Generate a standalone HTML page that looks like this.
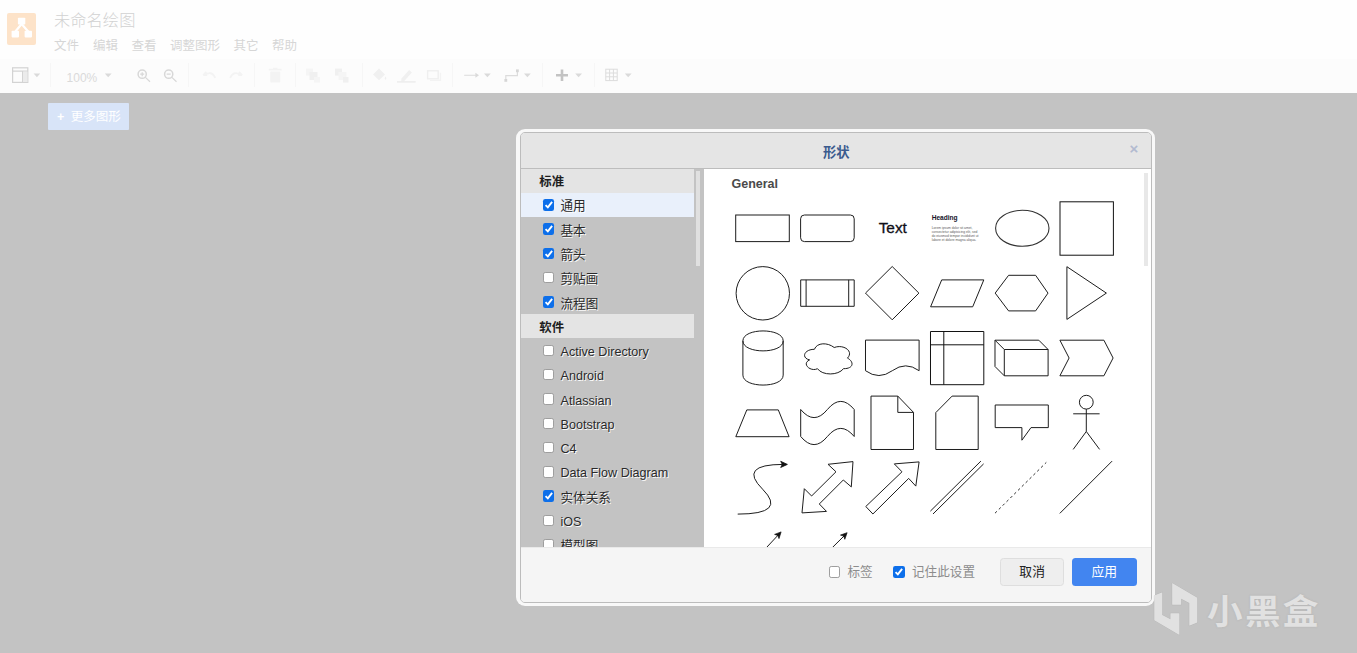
<!DOCTYPE html>
<html lang="zh-CN">
<head>
<meta charset="utf-8">
<title>未命名绘图</title>
<style>
*{box-sizing:border-box;margin:0;padding:0}
html,body{width:1357px;height:653px;overflow:hidden}
body{background:#c3c3c3;font-family:"Liberation Sans","Noto Sans CJK SC",sans-serif;position:relative;color:#222}
.abs{position:absolute}
#topbar{left:0;top:0;width:1357px;height:59px;background:#fefefe}
#toolbar{left:0;top:59px;width:1357px;height:33.5px;background:#fcfcfc}
#logo{left:7px;top:13px;width:29px;height:32px;background:#fde3c9;border-radius:2px}
#doctitle{left:54px;top:8px;font-size:16.3px;line-height:24px;color:#d2d2d2;font-weight:300;white-space:nowrap}
.menu{top:37.200px;font-size:12.5px;line-height:18px;color:#d6d6d6;white-space:nowrap}
.tb{color:#dcdcdc}
#more{left:48px;top:103px;width:81px;height:27px;background:#d8e4f8;border-radius:1px;color:#fff;font-size:12.5px;line-height:29px;white-space:nowrap}
/* dialog */
#dlgo{left:516px;top:128.5px;width:639.2px;height:477.5px;border-radius:9px;background:#f8f8f8}
#dlgi{left:519.5px;top:132px;width:632.4px;height:471px;border-radius:5px;border:1px solid #bcbcbc;background:#f5f5f5;overflow:hidden}
#dtitle{left:0;top:0;width:630.4px;height:35.6px;background:#e5e5e5;border-bottom:1px solid #bdbdbd}
#dtitle span{position:absolute;left:0;width:631.4px;top:9.5px;text-align:center;font-weight:bold;font-size:13.3px;line-height:20px;color:#3b5b8e}
#dclose{left:609px;top:6px;font-size:15px;line-height:20px;color:#b2bad0;font-weight:bold}
#list{left:0;top:35.7px;width:183px;height:378.8px;background:#c3c3c3;overflow:hidden}
.hd{position:absolute;left:0;width:173.5px;height:24.2px;background:#e4e4e4;font-weight:bold;font-size:12.4px;line-height:24px;padding-left:18.8px;padding-top:1.7px;color:#1e1e1e}
.it{position:absolute;left:0;width:173.5px;height:24.3px;font-size:12.6px;line-height:24.3px;padding-left:40px;padding-top:1.5px;color:#2a2a2a;white-space:nowrap;text-shadow:0.9px 0.9px 0 rgba(255,255,255,.95)}
.it.sel{background:#e9f0fb}
.cb{position:absolute;left:22px;top:6.2px;width:11.4px;height:11.4px;border-radius:2.2px;background:#fff;border:1px solid #9e9e9e}
.cb.on{background:#0d6fea;border:0}
.cb.on svg{position:absolute;left:0;top:0;width:11.4px;height:11.4px}
#lsb{left:175.7px;top:38px;width:4px;height:95px;background:#e0e0e0}
#main{left:183.1px;top:35.6px;width:447.3px;height:378.5px;background:#fff;overflow:hidden}
#msb{left:440.6px;top:4px;width:3.5px;height:93px;background:#e8e8e8}
#gen{left:27.9px;top:6.3px;font-weight:bold;font-size:12.5px;line-height:18px;color:#4a4a4a}
#foot{left:0;top:414px;width:630.4px;height:56px;background:#f5f5f5;border-top:1px solid #e9e9e9}
.flab{position:absolute;top:14.2px;font-size:12.6px;line-height:20px;color:#8c8c8c;white-space:nowrap}
.btn{position:absolute;top:10.4px;width:64.5px;height:27.2px;border-radius:3.5px;font-size:12.8px;line-height:27px;text-align:center}
#cancel{left:479.4px;background:#eeeeee;border:1px solid #dedede;color:#222;line-height:25.5px}
#apply{left:551.5px;background:#4285f0;color:#fff}
#wm{left:1206.5px;top:585.5px;font-size:34.6px;line-height:52px;font-weight:700;color:#e1e1e1;white-space:nowrap;letter-spacing:2.2px;transform:scaleX(1.03);transform-origin:0 0;text-shadow:0 0 2px rgba(150,150,150,.45)}
</style>
</head>
<body>
<div id="topbar" class="abs"></div>
<div id="toolbar" class="abs"></div>
<div id="logo" class="abs"><svg width="29" height="32" viewBox="7 13 29 32"><g stroke="#fff" stroke-width="2.2" fill="#fff"><path d="M21.600 24L15.400 31.500M21.600 24L28.200 31.500" fill="none"/><rect x="17.900" y="17.800" width="7.400" height="6.800" rx="0.800" stroke="none"/><rect x="11.600" y="30.800" width="7.400" height="6.600" rx="0.800" stroke="none"/><rect x="24.600" y="30.800" width="7.400" height="6.600" rx="0.800" stroke="none"/></g></svg></div>
<div id="doctitle" class="abs">未命名绘图</div>
<div class="abs menu" style="left:54px">文件</div>
<div class="abs menu" style="left:93px">编辑</div>
<div class="abs menu" style="left:131.5px">查看</div>
<div class="abs menu" style="left:170px">调整图形</div>
<div class="abs menu" style="left:233.5px">其它</div>
<div class="abs menu" style="left:272px">帮助</div>
<svg class="abs" style="left:0;top:58px" width="700" height="34" viewBox="0 58 700 34" fill="none">
  <g stroke="#f6f6f6" stroke-width="1">
    <path d="M50.5 63v24M188.5 63v24M254.5 63v24M295.5 63v24M362.5 63v24M452.5 63v24M542.5 63v24M594.5 63v24"/>
  </g>
  <!-- panel / view icon -->
  <g stroke="#d3d3d3" stroke-width="1.2">
    <rect x="12.6" y="67.8" width="15.2" height="14.6"/>
    <path d="M12.6 71.2h15.2M22.6 71.2v11.2"/>
  </g>
  <rect x="23" y="71.6" width="4.4" height="10.4" fill="#ebebeb"/>
  <g fill="#dadada">
    <path d="M33.6 73.6h6.6l-3.3 3.6z"/>
    <path d="M104.8 73.6h6.8l-3.4 3.6z"/>
    <path d="M484 73.6h6.8l-3.4 3.6z"/>
    <path d="M524 73.6h6.8l-3.4 3.6z"/>
    <path d="M575.2 73.6h6.8l-3.4 3.6z"/>
    <path d="M624.8 73.6h6.8l-3.4 3.6z"/>
  </g>
  <text x="66.600" y="81.600" font-family="Liberation Sans, sans-serif" font-size="12" fill="#dadada">100%</text>
  <!-- zoom in / out -->
  <g stroke="#d8d8d8" stroke-width="1.5">
    <circle cx="142.2" cy="74.2" r="4.1"/><path d="M145.4 77.4l4.6 4.4M142.2 72.2v4M140.2 74.2h4" stroke-width="1.2"/>
    <circle cx="168.7" cy="74.2" r="4.1"/><path d="M171.9 77.4l4.6 4.4M166.7 74.2h4" stroke-width="1.2"/>
  </g>
  <!-- undo / redo -->
  <g stroke="#f3f3f3" stroke-width="1.8">
    <path d="M203.2 75.2l3.2-3.2M203.2 75.2h4M205 75.4c3-3.4 8-3.2 10.2 2.6"/>
    <path d="M242.2 75.2l-3.2-3.2M242.2 75.2h-4M240.4 75.4c-3-3.4-8-3.2-10.200 2.600"/>
  </g>
  <!-- trash -->
  <g fill="#f3f3f3">
    <rect x="270.200" y="71.400" width="10" height="11" rx="1"/>
    <rect x="268.800" y="68.800" width="12.800" height="1.600"/>
    <rect x="273" y="67.800" width="4.400" height="1.400"/>
  </g>
  <!-- to front / to back -->
  <g fill="#f5f5f5">
    <rect x="306" y="68.600" width="7" height="7"/><rect x="309.500" y="72" width="8" height="8" fill="#f0f0f0"/><rect x="314" y="77" width="6" height="5.600"/>
    <rect x="335" y="68.600" width="7" height="7" fill="#f0f0f0"/><rect x="338.500" y="72" width="8" height="8"/><rect x="343" y="77" width="5.500" height="5.600" fill="#f0f0f0"/>
  </g>
  <!-- fill / pen / shadow -->
  <path d="M379 68.600l6 6-6 5.600-6-5.600z" fill="#f0f0f0"/>
  <path d="M385.500 76.500c1 1.400 1 2.600 0 3.200c-1-.6-1-1.800 0-3.200z" fill="#efefef"/>
  <path d="M401.500 78.600l7.600-8.600 2.800 2.600-7.600 8.400-3.200.600z" fill="#f0f0f0"/>
  <rect x="397" y="81.200" width="18.600" height="1.400" fill="#ebebeb"/>
  <rect x="427.600" y="70.800" width="10.600" height="8" stroke="#efefef" stroke-width="1.400"/>
  <path d="M430 80.400h10.400v-7.600" stroke="#f3f3f3" stroke-width="1.400"/>
  <!-- connection / waypoint -->
  <g stroke="#dedede" stroke-width="1.100">
    <path d="M464.200 75.300h12.600"/>
  </g>
  <path d="M475.400 72.800l3.600 2.500-3.600 2.500z" fill="#dadada"/>
  <g stroke="#dcdcdc" stroke-width="1.200">
    <path d="M505.800 80.400v-4.800h11.600v-4.800"/>
  </g>
  <rect x="504.400" y="79" width="2.800" height="2.800" fill="#d6d6d6"/>
  <rect x="516" y="69.400" width="2.800" height="2.800" fill="#d6d6d6"/>
  <!-- plus -->
  <path d="M562 69.400v11.600M556 75.200h12" stroke="#c3c3c3" stroke-width="2.600"/>
  <!-- table -->
  <g stroke="#dcdcdc" stroke-width="1">
    <rect x="605.800" y="69.200" width="11.400" height="11.400"/>
    <path d="M609.600 69.200v11.400M613.400 69.200v11.400M605.800 73v0h11.400M605.800 76.800h11.400"/>
  </g>
</svg>

<div id="more" class="abs"><span style="padding-left:9px;padding-right:3px;font-weight:bold">+</span> 更多图形</div>

<div id="dlgo" class="abs"></div>
<div id="dlgi" class="abs">
  <div id="dtitle" class="abs"><span>形状</span><div id="dclose" class="abs">×</div></div>
  <div id="list" class="abs">
    <div class="hd" style="top:0.00px">标准</div>
    <div class="it sel" style="top:24.27px"><div class="cb on"><svg viewBox="0 0 12 12"><path d="M2.7 6.5 L5.1 8.8 L9.6 3" fill="none" stroke="#fff" stroke-width="2"/></svg></div>通用</div>
    <div class="it" style="top:48.54px"><div class="cb on"><svg viewBox="0 0 12 12"><path d="M2.7 6.5 L5.1 8.8 L9.6 3" fill="none" stroke="#fff" stroke-width="2"/></svg></div>基本</div>
    <div class="it" style="top:72.81px"><div class="cb on"><svg viewBox="0 0 12 12"><path d="M2.7 6.5 L5.1 8.8 L9.6 3" fill="none" stroke="#fff" stroke-width="2"/></svg></div>箭头</div>
    <div class="it" style="top:97.08px"><div class="cb"></div>剪贴画</div>
    <div class="it" style="top:121.35px"><div class="cb on"><svg viewBox="0 0 12 12"><path d="M2.7 6.5 L5.1 8.8 L9.6 3" fill="none" stroke="#fff" stroke-width="2"/></svg></div>流程图</div>
    <div class="hd" style="top:145.62px">软件</div>
    <div class="it" style="top:169.89px"><div class="cb"></div>Active Directory</div>
    <div class="it" style="top:194.16px"><div class="cb"></div>Android</div>
    <div class="it" style="top:218.43px"><div class="cb"></div>Atlassian</div>
    <div class="it" style="top:242.70px"><div class="cb"></div>Bootstrap</div>
    <div class="it" style="top:266.97px"><div class="cb"></div>C4</div>
    <div class="it" style="top:291.24px"><div class="cb"></div>Data Flow Diagram</div>
    <div class="it" style="top:315.51px"><div class="cb on"><svg viewBox="0 0 12 12"><path d="M2.7 6.5 L5.1 8.8 L9.6 3" fill="none" stroke="#fff" stroke-width="2"/></svg></div>实体关系</div>
    <div class="it" style="top:339.78px"><div class="cb"></div>iOS</div>
    <div class="it" style="top:364.05px"><div class="cb"></div>模型图</div>
  </div>
  <div id="lsb" class="abs"></div>
  <div id="main" class="abs">
    <div id="gen" class="abs">General</div>
    <svg class="abs" style="left:0;top:0" width="447.3" height="380" viewBox="703.6 168.6 447.3 380">
      <rect x="735.3" y="214.6" width="53.6" height="26.6" fill="none" stroke="#1c1c1c" stroke-width="1"/>
      <rect x="800.2" y="214.6" width="53.6" height="26.6" rx="3.8" fill="none" stroke="#1c1c1c" stroke-width="1"/>
      <text x="892.4" y="232.9" text-anchor="middle" font-family="Liberation Sans, sans-serif" font-size="15.4" fill="#101018" stroke="#101018" stroke-width="0.3">Text</text>
      <text x="931.3" y="220.1" font-family="Liberation Sans, sans-serif" font-size="6.6" font-weight="bold" fill="#15152a">Heading</text>
      <text x="931.3" y="228.90" font-family="Liberation Sans, sans-serif" font-size="3.32" fill="#5a5a5a">Lorem ipsum dolor sit amet,</text>
      <text x="931.3" y="232.85" font-family="Liberation Sans, sans-serif" font-size="3.32" fill="#5a5a5a">consectetur adipisicing elit, sed</text>
      <text x="931.3" y="236.80" font-family="Liberation Sans, sans-serif" font-size="3.32" fill="#5a5a5a">do eiusmod tempor incididunt ut</text>
      <text x="931.3" y="240.75" font-family="Liberation Sans, sans-serif" font-size="3.32" fill="#5a5a5a">labore et dolore magna aliqua.</text>
      <ellipse cx="1021.9" cy="227.9" rx="26.7" ry="18" fill="none" stroke="#333" stroke-width="1.1"/>
      <rect x="1059.6" y="201.4" width="53.4" height="53.4" fill="none" stroke="#111" stroke-width="1"/>
      <circle cx="762.4" cy="292.9" r="26.7" fill="none" stroke="#1c1c1c" stroke-width="1"/>
      <path d="M800.3 279.5h53.5v26.4h-53.5zM805.7 279.5v26.4M848.3 279.5v26.4" fill="none" stroke="#1c1c1c" stroke-width="1"/>
      <path d="M891.8 266.1L918.5 292.7L891.8 319.4L865.1 292.7z" fill="none" stroke="#1c1c1c" stroke-width="1"/>
      <path d="M930.2 306.4L941.3 279.5H983.4L972.3 306.4z" fill="none" stroke="#1c1c1c" stroke-width="1"/>
      <path d="M994.8 292.7L1008.2 274.9H1035.2L1047.6 292.7L1035.2 310.5H1008.2z" fill="none" stroke="#1c1c1c" stroke-width="1"/>
      <path d="M1066.5 266.3L1106 292.7L1066.5 319z" fill="none" stroke="#1c1c1c" stroke-width="1"/>
      <path d="M742.5 340.5C742.5 327.2 782.8 327.2 782.8 340.5V374.7C782.8 388 742.5 388 742.5 374.7zM742.5 340.5C742.5 353.8 782.8 353.8 782.8 340.5" fill="none" stroke="#1c1c1c" stroke-width="1"/>
      <path d="M814.0 348.9C803.4 348.9 800.7 357.7 809.2 359.5C800.7 363.3 810.2 371.8 817.1 368.3C821.9 375.3 837.8 375.3 843.1 368.3C853.7 368.3 853.7 361.2 847.1 357.7C853.7 350.7 843.1 343.6 833.8 347.1C827.2 341.9 816.6 341.9 814.0 348.9Z" fill="none" stroke="#1c1c1c" stroke-width="1"/>
      <path d="M865.1 339.7H918.7V370.3Q905.3 360.6 891.9 370.3Q878.5 380.0 865.1 370.3Z" fill="none" stroke="#1c1c1c" stroke-width="1"/>
      <path d="M930.1 331.1h53.3v53.2h-53.3zM943.4 331.1v53.2M930.1 344.4h53.3" fill="none" stroke="#111" stroke-width="1"/>
      <path d="M994.6 339.8H1038.4L1047.7 349.1V375.4H1003.9L994.6 366.1zM994.6 339.8L1003.9 349.1H1047.7M1003.9 349.1V375.4" fill="none" stroke="#1c1c1c" stroke-width="1"/>
      <path d="M1059.5 339.8H1103.5L1112.7 357.6L1103.5 375.4H1059.5L1068.7 357.6z" fill="none" stroke="#1c1c1c" stroke-width="1"/>
      <path d="M735.4 436.3L746.4 409.5H777.9L788.7 436.3z" fill="none" stroke="#1c1c1c" stroke-width="1"/>
      <path d="M800.3 409.1Q813.7 425.3 827.0 409.1Q840.4 392.9 853.8 409.1V436.1Q840.4 419.9 827.0 436.1Q813.7 452.3 800.3 436.1Z" fill="none" stroke="#1c1c1c" stroke-width="1"/>
      <path d="M870.6 395.7H897.4L913.1 412V449.1H870.6zM897.4 395.7V412H913.1" fill="none" stroke="#1c1c1c" stroke-width="1"/>
      <path d="M951.7 395.7H977.8V449.1H935.4V412.2z" fill="none" stroke="#1c1c1c" stroke-width="1"/>
      <path d="M994.8 404.6H1047.9V427.2H1030.6L1021.5 439.8V427.2H994.8z" fill="none" stroke="#1c1c1c" stroke-width="1"/>
      <path d="M1079 401.8a6.9 6.9 0 1 0 13.8 0a6.9 6.9 0 1 0 -13.8 0M1085.9 408.7V431.1M1072.8 413.4H1099.2M1085.9 431.1L1072.8 449M1085.9 431.1L1099.2 449" fill="none" stroke="#1c1c1c" stroke-width="1"/>
      <path d="M737.3 513.7Q787 513.7 762.2 488.8Q737.3 464 783 464" fill="none" stroke="#1c1c1c" stroke-width="1"/>
      <path d="M787 464L780.3 467.1L781.9 464L780.3 460.9z" fill="#111" stroke="#111" stroke-width="0.8"/>
      <path d="M852.6 461.2L827.6 463.9L835.6 471.4L811.2 495.6L803.9 488.3L801.6 512.5L826.1 511L818.9 503.6L842.9 479.6L850.9 486.5z" fill="none" stroke="#1c1c1c" stroke-width="1"/>
      <path d="M918.7 461.5L893.9 463.5L901.6 471.4L865.4 506.1L872.5 513.6L908.3 478L915.4 485.7z" fill="none" stroke="#1c1c1c" stroke-width="1"/>
      <path d="M930 510.7L980.5 460.7M932.6 513.6L983.2 463.5" fill="none" stroke="#1c1c1c" stroke-width="1"/>
      <path d="M994.6 512.8L1045.9 462" fill="none" stroke="#1a1a1a" stroke-width="0.9" stroke-dasharray="2.7 2.7"/>
      <path d="M1059.4 513L1111.7 460.7" fill="none" stroke="#1c1c1c" stroke-width="1"/>
      <path d="M761 552.6L778 534.4" fill="none" stroke="#1c1c1c" stroke-width="1"/>
      <path d="M780.7 531.5L778.6 538.2L777.5 535L774.2 534z" fill="#111" stroke="#111" stroke-width="0.7"/>
      <path d="M826.5 552.6L844 535.2" fill="none" stroke="#1c1c1c" stroke-width="1"/>
      <path d="M846.7 532.3L844.4 538.9L843.4 535.7L840.1 534.7z" fill="#111" stroke="#111" stroke-width="0.7"/>
    </svg>
    <div id="msb" class="abs"></div>
  </div>
  <div id="foot" class="abs">
    <div class="cb" style="left:308.2px;top:18.2px"></div>
    <div class="flab" style="left:327px">标签</div>
    <div class="cb on" style="left:372.8px;top:18.2px"><svg viewBox="0 0 12 12"><path d="M2.7 6.5 L5.1 8.8 L9.6 3" fill="none" stroke="#fff" stroke-width="2"/></svg></div>
    <div class="flab" style="left:391.5px">记住此设置</div>
    <div id="cancel" class="btn">取消</div>
    <div id="apply" class="btn">应用</div>
  </div>
</div>
<svg class="abs" style="left:1148px;top:578px" width="56" height="64" viewBox="1148 578 56 64"><g fill="#e1e1e1" stroke="rgba(150,150,150,.35)" stroke-width="0.8" paint-order="stroke"><path d="M1154.3 595.6L1162.3 592.2V615L1170.4 619.3V613.3H1179.4V634.9L1154.3 620.2z"/><path d="M1197.3 622.5L1189.3 625.8V603L1181.2 598.8V604.8H1172.2V583.1L1197.3 597.8z"/></g></svg>
<div id="wm" class="abs">小黑盒</div>
</body>
</html>
